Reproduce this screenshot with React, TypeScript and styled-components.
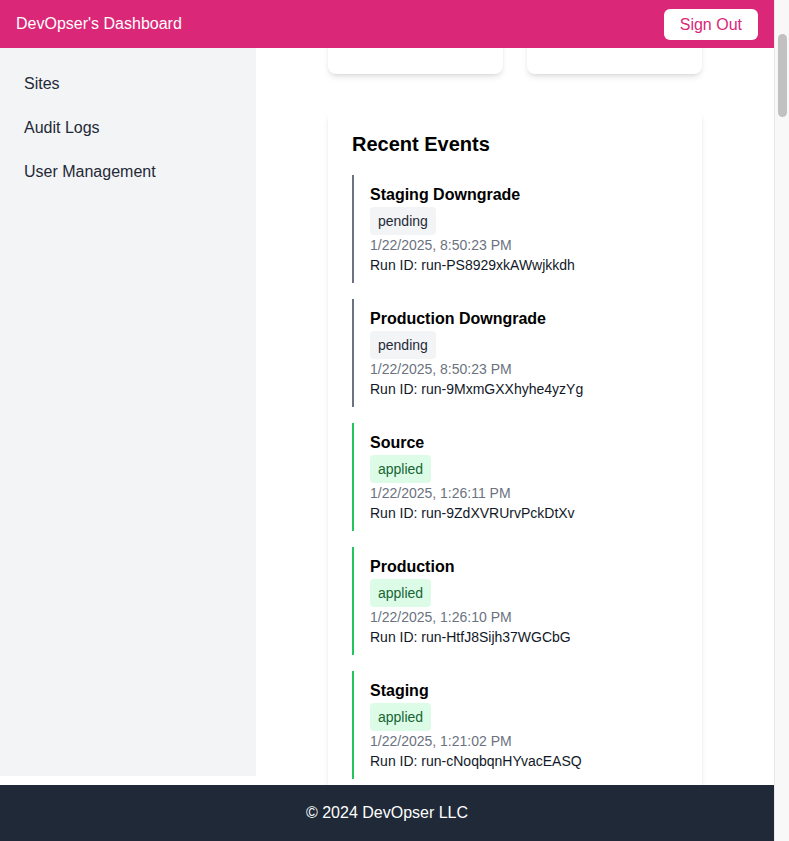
import React, { useLayoutEffect, useRef } from 'react';
import styled, { createGlobalStyle } from 'styled-components';

type EventStatus = 'pending' | 'applied';

interface SiteEvent {
	title: string;
	status: EventStatus;
	time: string;
	runId: string;
}

const GlobalStyle = createGlobalStyle`
	html, body {
		margin: 0;
		padding: 0;
		background: #fff;
		font-family: "Liberation Sans", Arial, Helvetica, sans-serif;
		color: #111827;
		overflow: hidden;
	}
	* {
		box-sizing: border-box;
	}
`;

const Shell = styled.div`
	display: flex;
	width: 100%;
	height: 841px;
	overflow: hidden;
`;

const Page = styled.div`
	flex: 1;
	min-width: 0;
	display: flex;
	flex-direction: column;
`;

const ScrollTrack = styled.div`
	flex: 0 0 15px;
	background: #f8f8f8;
	border-left: 1px solid #e8e8e8;
	padding: 34px 2px 0 3px;
`;

const ScrollThumb = styled.div`
	height: 83px;
	border-radius: 5px;
	background: #c1c1c1;
`;

const Header = styled.header`
	flex: 0 0 48px;
	display: flex;
	align-items: center;
	justify-content: space-between;
	padding: 0 16px;
	background: #db2777;
	color: #fff;
`;

const Brand = styled.div`
	font-size: 16px;
	line-height: 24px;
`;

const SignOutButton = styled.button`
	font-family: inherit;
	font-size: 16px;
	line-height: 23px;
	padding: 4px 16px;
	border: none;
	border-radius: 6px;
	background: #fff;
	color: #db2777;
	cursor: pointer;
`;

const Layout = styled.div`
	flex: 1;
	min-height: 0;
	display: flex;
	align-items: flex-start;
`;

const Sidebar = styled.nav`
	flex: 0 0 256px;
	height: 728px;
	background: #f3f4f6;
	padding: 16px 0;
	display: flex;
	flex-direction: column;
	gap: 4px;
`;

const NavItem = styled.a`
	display: block;
	padding: 8px 24px;
	font-size: 16px;
	line-height: 24px;
	color: #1f2937;
	text-decoration: none;
	cursor: pointer;
`;

const Main = styled.main`
	flex: 1;
	min-width: 0;
	align-self: stretch;
	overflow: hidden;
	padding: 24px 0 40px;
`;

const Container = styled.div`
	width: 374px;
	margin: 0 auto;
`;

const PageTitle = styled.h1`
	margin: 0 0 24px;
	font-size: 24px;
	line-height: 32px;
	font-weight: 700;
`;

const StatsGrid = styled.div`
	display: grid;
	grid-template-columns: 1fr 1fr;
	gap: 24px;
	margin-bottom: 36px;
`;

const Card = styled.section`
	background: #fff;
	border-radius: 8px;
	box-shadow: 0 4px 6px -1px rgba( 0, 0, 0, 0.1 ),
		0 2px 4px -2px rgba( 0, 0, 0, 0.1 );
`;

const StatCard = styled( Card )`
	height: 140px;
	padding: 24px;
`;

const StatLabel = styled.div`
	font-size: 14px;
	line-height: 20px;
	color: #6b7280;
`;

const StatValue = styled.div`
	margin-top: 8px;
	font-size: 30px;
	line-height: 36px;
	font-weight: 700;
`;

const EventsCard = styled( Card )`
	padding: 24px;
`;

const SectionTitle = styled.h2`
	margin: 0 0 21px;
	font-size: 20px;
	line-height: 20px;
	font-weight: 700;
	color: #000;
`;

const EventList = styled.div`
	display: flex;
	flex-direction: column;
	gap: 16px;
`;

const EventItem = styled.div< { $status: EventStatus } >`
	border-left: 2px solid
		${ ( p ) => ( p.$status === 'applied' ? '#22c55e' : '#6b7280' ) };
	padding: 8px 0 8px 16px;
	display: flex;
	flex-direction: column;
	align-items: flex-start;
`;

const EventTitle = styled.div`
	font-size: 16px;
	line-height: 24px;
	font-weight: 700;
	color: #000;
`;

const Badge = styled.span< { $status: EventStatus } >`
	display: inline-block;
	padding: 4px 8px;
	font-size: 14px;
	line-height: 20px;
	border-radius: 4px;
	background: ${ ( p ) => ( p.$status === 'applied' ? '#dcfce7' : '#f3f4f6' ) };
	color: ${ ( p ) => ( p.$status === 'applied' ? '#166534' : '#1f2937' ) };
`;

const EventTime = styled.div`
	font-size: 14px;
	line-height: 20px;
	color: #6b7280;
`;

const RunId = styled.div`
	font-size: 14px;
	line-height: 20px;
	color: #111827;
`;

const Footer = styled.footer`
	flex: 0 0 56px;
	background: #1f2937;
	color: #fff;
	text-align: center;
	padding: 16px;
	font-size: 16px;
	line-height: 24px;
`;

const recentEvents: SiteEvent[] = [
	{ title: 'Staging Downgrade', status: 'pending', time: '1/22/2025, 8:50:23 PM', runId: 'run-PS8929xkAWwjkkdh' },
	{ title: 'Production Downgrade', status: 'pending', time: '1/22/2025, 8:50:23 PM', runId: 'run-9MxmGXXhyhe4yzYg' },
	{ title: 'Source', status: 'applied', time: '1/22/2025, 1:26:11 PM', runId: 'run-9ZdXVRUrvPckDtXv' },
	{ title: 'Production', status: 'applied', time: '1/22/2025, 1:26:10 PM', runId: 'run-HtfJ8Sijh37WGCbG' },
	{ title: 'Staging', status: 'applied', time: '1/22/2025, 1:21:02 PM', runId: 'run-cNoqbqnHYvacEASQ' },
];

// how far the main panel is scrolled in the captured state
const MAIN_SCROLL = 194;

export default function App() {
	const mainRef = useRef< HTMLElement >( null );

	useLayoutEffect( () => {
		if ( mainRef.current ) {
			mainRef.current.scrollTop = MAIN_SCROLL;
		}
	}, [] );

	return (
		<>
			<GlobalStyle />
			<Shell>
				<Page>
					<Header>
						<Brand>DevOpser's Dashboard</Brand>
						<SignOutButton>Sign Out</SignOutButton>
					</Header>
					<Layout>
						<Sidebar>
							<NavItem>Sites</NavItem>
							<NavItem>Audit Logs</NavItem>
							<NavItem>User Management</NavItem>
						</Sidebar>
						<Main ref={ mainRef }>
							<Container>
								<PageTitle>Dashboard</PageTitle>
								<StatsGrid>
									<StatCard>
										<StatLabel>Total Sites</StatLabel>
										<StatValue>3</StatValue>
									</StatCard>
									<StatCard>
										<StatLabel>Deployments</StatLabel>
										<StatValue>5</StatValue>
									</StatCard>
								</StatsGrid>
								<EventsCard>
									<SectionTitle>Recent Events</SectionTitle>
									<EventList>
										{ recentEvents.map( ( ev ) => (
											<EventItem key={ ev.runId } $status={ ev.status }>
												<EventTitle>{ ev.title }</EventTitle>
												<Badge $status={ ev.status }>{ ev.status }</Badge>
												<EventTime>{ ev.time }</EventTime>
												<RunId>Run ID: { ev.runId }</RunId>
											</EventItem>
										) ) }
									</EventList>
								</EventsCard>
							</Container>
						</Main>
					</Layout>
					<Footer>© 2024 DevOpser LLC</Footer>
				</Page>
				<ScrollTrack>
					<ScrollThumb />
				</ScrollTrack>
			</Shell>
		</>
	);
}
